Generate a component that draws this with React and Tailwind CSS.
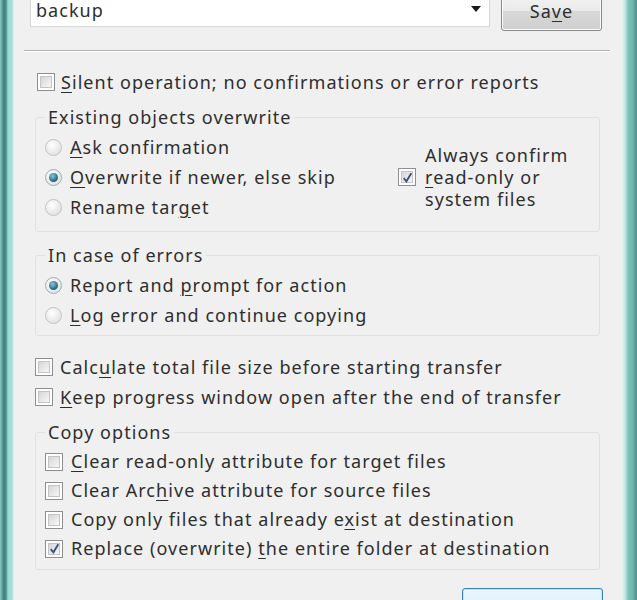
import React from 'react';

const Box = ({ checked }) => (
  <span className="flex h-[18px] w-[18px] shrink-0 items-center justify-center border border-[#8e8f8f] bg-white p-[2px]">
    <span className="relative flex h-full w-full items-center justify-center border border-[#c4c4c4] bg-[linear-gradient(135deg,#d6d6d6,#f7f7f7)]">
      {checked && (
        <svg viewBox="0 0 12 12" className="absolute h-[13px] w-[13px]">
          <path d="M2.5 6.5 L5 9.5 L9.5 2" fill="none" stroke="#3d4f7c" strokeWidth="1.7" />
        </svg>
      )}
    </span>
  </span>
);

const Radio = ({ checked }) => (
  <span
    className={
      'flex h-[17px] w-[17px] shrink-0 items-center justify-center rounded-full border bg-[radial-gradient(circle_at_40%_35%,#ffffff,#d9d9d9)] ' +
      (checked ? 'border-[#8fb3c4]' : 'border-[#c2c2c2]')
    }
  >
    {checked && (
      <span className="h-[9px] w-[9px] rounded-full bg-[radial-gradient(circle_at_40%_35%,#8ec6d9,#1f5f78_70%)]" />
    )}
  </span>
);

const Row = ({ control, gap = 'gap-[8px]', h = 'h-[30px]', children }) => (
  <div className={'flex items-center ' + gap + ' ' + h}>
    {control}
    <span className="whitespace-nowrap">{children}</span>
  </div>
);

const Group = ({ title, className = '', children }) => (
  <fieldset className={'rounded-[3px] border border-[#dde1e4] px-[9px] ' + className}>
    <legend className="h-[24px] px-[3px] leading-[24px]">{title}</legend>
    {children}
  </fieldset>
);

const U = ({ children }) => <span className="underline decoration-1 underline-offset-[3px]">{children}</span>;

export default function App() {
  return (
    <div
      className="flex h-[600px] w-[637px] overflow-hidden bg-[#f0f0f0] text-[18px] tracking-[1.05px] text-[#2e2e2e]"
      style={{ fontFamily: '"Noto Sans", "Open Sans", sans-serif' }}
    >
      <div className="w-[14px] shrink-0 bg-[linear-gradient(to_right,#8ccbc3_0px,#3e7b7d_4px,#4f8f8f_6px,#96d8cf_8px,#a6e0d8_12px,#e4f2f0_14px)]" />

      <div className="flex min-w-0 flex-1 flex-col pl-[10px] pr-[12px]">
        <div className="mt-[-10px] flex gap-[11px] pl-[6px]">
          <div className="flex h-[37px] w-[460px] items-end justify-between border border-[#d9d9d9] border-t-0 bg-white pb-[6px] pl-[5px] pr-[8px]">
            <span className="leading-[20px]">backup</span>
            <svg viewBox="0 0 10 6" className="mb-[8px] h-[6px] w-[10px]">
              <path d="M0 0 H10 L5 6 Z" fill="#1a1a1a" />
            </svg>
          </div>
          <div className="flex h-[41px] w-[101px] items-end justify-center rounded-[3px] border border-[#8a8a8a] bg-[linear-gradient(#f4f4f4,#ebebeb_50%,#d8d8d8_51%,#cfcfcf)] pb-[9px] shadow-[inset_0_0_0_1px_#fbfbfb]">
            <span className="leading-[20px]">Sa<U>v</U>e</span>
          </div>
        </div>

        <div className="mt-[19px] h-[2px] border-t border-[#b4b4b4] border-b border-b-white" />

        <div className="mt-[15px] pl-[13px]">
          <Row control={<Box />} gap="gap-[6px]">
            <U>S</U>ilent operation; no confirmations or error reports
          </Row>
        </div>

        <Group title="Existing objects overwrite" className="ml-[11px] mr-[10px] mt-[8px] pb-[9px]">
          <div className="mt-[3px] flex">
            <div className="flex w-[353px] flex-col">
              <Row control={<Radio />}>
                <U>A</U>sk confirmation
              </Row>
              <Row control={<Radio checked />}>
                <U>O</U>verwrite if newer, else skip
              </Row>
              <Row control={<Radio />}>
                Rename tar<U>g</U>et
              </Row>
            </div>
            <div className="flex items-center gap-[9px]">
              <Box checked />
              <div className="leading-[22px]">
                Always confirm
                <br />
                <U>r</U>ead-only or
                <br />
                system files
              </div>
            </div>
          </div>
        </Group>

        <Group title="In case of errors" className="ml-[11px] mr-[10px] mt-[11px] pb-[5px]">
          <div className="mt-[3px] flex flex-col">
            <Row control={<Radio checked />}>
              Report and <U>p</U>rompt for action
            </Row>
            <Row control={<Radio />}>
              <U>L</U>og error and continue copying
            </Row>
          </div>
        </Group>

        <div className="mt-[16px] flex flex-col pl-[11px]">
          <Row control={<Box />} gap="gap-[7px]">
            Calc<U>u</U>late total file size before starting transfer
          </Row>
          <Row control={<Box />} gap="gap-[7px]">
            <U>K</U>eep progress window open after the end of transfer
          </Row>
        </div>

        <Group title="Copy options" className="ml-[11px] mr-[10px] mt-[8px] pb-[6px]">
          <div className="mt-[3px] flex flex-col">
            <Row control={<Box />} h="h-[29px]">
              <U>C</U>lear read-only attribute for target files
            </Row>
            <Row control={<Box />} h="h-[29px]">
              Clear Arc<U>h</U>ive attribute for source files
            </Row>
            <Row control={<Box />} h="h-[29px]">
              Copy only files that already e<U>x</U>ist at destination
            </Row>
            <Row control={<Box checked />} h="h-[29px]">
              Replace (overwrite) <U>t</U>he entire folder at destination
            </Row>
          </div>
        </Group>

        <div className="mt-[18px] flex justify-end pr-[7px]">
          <div className="h-[30px] w-[141px] rounded-[3px] border border-[#3c7fb1] bg-[linear-gradient(#eaf6fd,#d9f0fc)] shadow-[inset_0_0_0_1px_#bfe6f9]" />
        </div>
      </div>

      <div className="w-[15px] shrink-0 bg-[linear-gradient(to_right,#e6f3f1_0px,#c4e6e2_3px,#7fc2ba_6px,#6bb3ac_11px,#4c8c8b_15px)]" />
    </div>
  );
}
